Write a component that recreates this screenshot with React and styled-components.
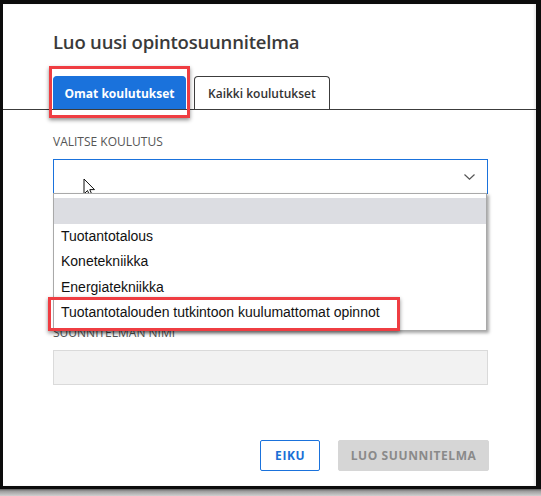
import React from 'react'
import styled, { createGlobalStyle } from 'styled-components'

const GlobalStyle = createGlobalStyle`
  html, body {
    margin: 0;
    padding: 0;
    background: #b9b9b9;
  }
  * { box-sizing: border-box; }
`

const Screen = styled.div`
  width: 541px;
  height: 496px;
  background: linear-gradient(#5a5a5a 489px, #9a9a9a 491px, #d0d0d0 496px);
  overflow: hidden;
`

const Frame = styled.div`
  width: 541px;
  height: 489px;
  background: #0c0c0c;
  padding: 4px 5px 3px 3px;
`

const Dialog = styled.div`
  position: relative;
  height: 100%;
  background: #fff;
  box-shadow: inset -2px 0 2px rgba(0, 0, 0, 0.08);
  font-family: "Open Sans", "Noto Sans", sans-serif;
  display: flex;
  flex-direction: column;
`

const Title = styled.h2`
  margin: 0;
  padding: 25px 48px 0 50px;
  font-size: 18.5px;
  line-height: 26px;
  font-weight: 600;
  color: #3a3a3a;
  letter-spacing: -0.2px;
`

const TabBar = styled.div`
  display: flex;
  gap: 8px;
  margin-top: 21px;
  padding-left: 50px;
  border-bottom: 1px solid #3c3c3c;
`

const Tab = styled.button`
  position: relative;
  height: 33px;
  padding: 0 ${p => (p.$active ? 10.5 : 13)}px;
  font-family: inherit;
  font-size: 12px;
  font-weight: ${p => (p.$active ? 700 : 600)};
  border-radius: 4px 4px 0 0;
  border: 1px solid ${p => (p.$active ? '#1a72dc' : '#3c3c3c')};
  border-bottom: none;
  background: ${p => (p.$active ? '#1a72dc' : '#fff')};
  color: ${p => (p.$active ? '#fff' : '#333')};
  cursor: pointer;
`

const Highlight = styled.span`
  position: absolute;
  left: ${p => p.$left}px;
  top: ${p => p.$top}px;
  right: ${p => p.$right}px;
  bottom: ${p => p.$bottom}px;
  border: 3px solid #ef3d42;
  box-shadow: 0 2px 4px rgba(0, 0, 0, 0.45);
  pointer-events: none;
`

const Body = styled.div`
  position: relative;
  padding: 0 48px 0 50px;
`

const Label = styled.div`
  font-size: 12px;
  line-height: 16px;
  color: #555;
  text-transform: uppercase;
  margin-top: ${p => p.$top}px;
  margin-bottom: 9px;
`

const Select = styled.div`
  position: relative;
  height: 35px;
  border: 1px solid #1a72dc;
  display: flex;
  align-items: center;
  justify-content: flex-end;
  padding-right: 12px;
`

const Dropdown = styled.ul`
  position: absolute;
  left: -1px;
  right: 0;
  top: 33px;
  margin: 0;
  padding: 4px 0 4px;
  list-style: none;
  background: #fff;
  border: 1px solid #a9a9a9;
  box-shadow: 2px 2px 3px rgba(0, 0, 0, 0.35);
  z-index: 2;
`

const Option = styled.li`
  position: relative;
  height: 25.5px;
  line-height: 25.5px;
  padding-left: 7px;
  font-family: "Liberation Sans", Arial, sans-serif;
  font-size: 14px;
  color: #111;
  background: ${p => (p.$hover ? '#dcdde2' : 'transparent')};
`

const OptionText = styled.span`
  position: relative;
  z-index: 1;
`

const Input = styled.div`
  height: 35px;
  background: #f2f2f2;
  border: 1px solid #dadada;
`

const Footer = styled.div`
  margin-top: auto;
  padding: 0 47px 15px 0;
  display: flex;
  justify-content: flex-end;
  gap: 18px;
`

const Button = styled.button`
  height: 31px;
  padding: 0 ${p => (p.$primary ? 11.5 : 14)}px;
  font-family: inherit;
  font-size: 12px;
  font-weight: 700;
  letter-spacing: 0.6px;
  border-radius: 2px;
  border: 1px solid ${p => (p.$primary ? '#d6d6d6' : '#1a72dc')};
  background: ${p => (p.$primary ? '#d6d6d6' : '#fff')};
  color: ${p => (p.$primary ? '#8a8a8a' : '#1a6fd6')};
`

const Cursor = styled.svg`
  position: absolute;
  left: 29px;
  top: 18px;
`

const options = ['', 'Tuotantotalous', 'Konetekniikka', 'Energiatekniikka', 'Tuotantotalouden tutkintoon kuulumattomat opinnot']

export default function App() {
  return (
    <Screen>
      <GlobalStyle />
      <Frame>
        <Dialog>
          <Title>Luo uusi opintosuunnitelma</Title>
          <TabBar>
            <Tab $active>
              Omat koulutukset
              <Highlight $left={-5} $top={-11} $right={-5} $bottom={-9} />
            </Tab>
            <Tab>Kaikki koulutukset</Tab>
          </TabBar>
          <Body>
            <Label $top={24}>Valitse koulutus</Label>
            <Select>
              <svg width="11" height="6" viewBox="0 0 11 6">
                <path d="M0.5 0.5 L5.5 5.2 L10.5 0.5" fill="none" stroke="#555" strokeWidth="1.2" />
              </svg>
              <Cursor width="13" height="20" viewBox="0 0 13 20">
                <path d="M1 1 L1 16 L4.5 12.5 L7 18.5 L9.3 17.5 L6.8 11.6 L11.5 11.6 Z" fill="#fff" stroke="#111" strokeWidth="1" strokeLinejoin="round" />
              </Cursor>
              <Dropdown>
                {options.map((o, i) => (
                  <Option key={i} $hover={i === 0}>
                    <OptionText>{o || '\u00a0'}</OptionText>
                    {i === options.length - 1 && <Highlight $left={-6} $top={-3} $right={86} $bottom={-5} />}
                  </Option>
                ))}
              </Dropdown>
            </Select>
            <Label $top={131}>Suunnitelman nimi</Label>
            <Input />
          </Body>
          <Footer>
            <Button>EIKU</Button>
            <Button $primary>LUO SUUNNITELMA</Button>
          </Footer>
        </Dialog>
      </Frame>
    </Screen>
  )
}
